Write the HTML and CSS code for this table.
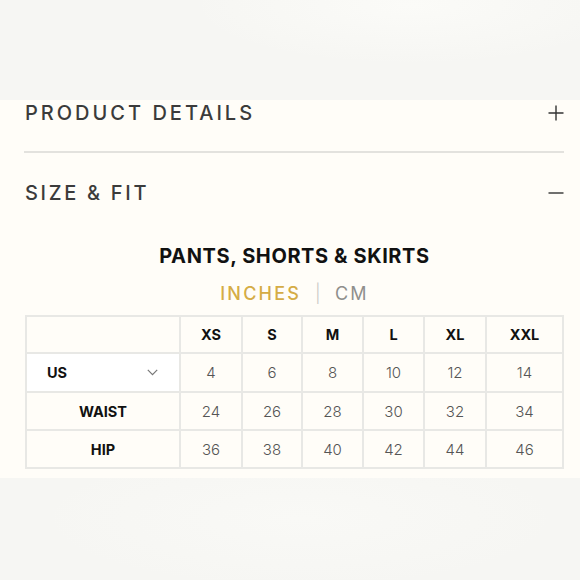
FILE: index.html
```html
<!DOCTYPE html>
<html>
<head>
<meta charset="utf-8">
<link rel="stylesheet" href="styles.css">
</head>
<body>
<div class="band band-top"></div>
<section class="panel">
  <div class="acc-head">
    <span class="acc-title">PRODUCT DETAILS</span>
    <svg class="acc-icon" width="16" height="16" viewBox="0 0 16 16"><path d="M8 0.5V15.5M0.5 8H15.5" stroke="#333" stroke-width="1.4" fill="none"/></svg>
  </div>
  <div class="divider"></div>
  <div class="acc-head acc-second">
    <span class="acc-title">SIZE &amp; FIT</span>
    <svg class="acc-icon" width="16" height="16" viewBox="0 0 16 16"><path d="M0.5 8H15.5" stroke="#333" stroke-width="1.4" fill="none"/></svg>
  </div>
  <h2 class="chart-title">PANTS, SHORTS &amp; SKIRTS</h2>
  <div class="units"><span class="unit-on">INCHES</span><span class="sep">|</span><span class="unit-off">CM</span></div>
  <table class="chart">
    <colgroup>
      <col class="c0"><col class="c1"><col class="c2"><col class="c3"><col class="c4"><col class="c5"><col class="c6">
    </colgroup>
    <tr class="r-head">
      <th></th><th>XS</th><th>S</th><th>M</th><th>L</th><th>XL</th><th>XXL</th>
    </tr>
    <tr class="r-us">
      <th class="sel"><div class="sel-inner"><span>US</span><svg width="11" height="7" viewBox="0 0 11 7"><path d="M0.8 0.8L5.5 5.6L10.2 0.8" stroke="#777" stroke-width="1.2" fill="none"/></svg></div></th>
      <td>4</td><td>6</td><td>8</td><td>10</td><td>12</td><td>14</td>
    </tr>
    <tr class="r-body">
      <th>WAIST</th><td>24</td><td>26</td><td>28</td><td>30</td><td>32</td><td>34</td>
    </tr>
    <tr class="r-body">
      <th>HIP</th><td>36</td><td>38</td><td>40</td><td>42</td><td>44</td><td>46</td>
    </tr>
  </table>
</section>
<div class="band band-bottom"></div>
</body>
</html>
```

FILE: styles.css
```css
* { box-sizing: border-box; }
html, body { margin: 0; padding: 0; }
body {
  width: 580px;
  height: 580px;
  overflow: hidden;
  background: #f6f6f3;
  font-family: "Inter", "Liberation Sans", sans-serif;
}
.band-top {
  height: 100px;
  background:
    radial-gradient(ellipse 220px 60px at 410px 5px, #fbfbf8 0%, rgba(251,251,248,0) 100%),
    #f6f6f3;
}
.band-bottom {
  height: 102px;
  background:
    radial-gradient(ellipse 260px 70px at 300px 40px, #f9f9f6 0%, rgba(249,249,246,0) 100%),
    #f6f6f3;
}
.panel {
  height: 378px;
  background: #fffdf8;
  padding: 0 16px 0 25px;
  display: flex;
  flex-direction: column;
}
.acc-head {
  height: 25px;
  flex: none;
  display: flex;
  align-items: center;
  justify-content: space-between;
}
.acc-title {
  font-size: 20px;
  font-weight: 500;
  letter-spacing: 3px;
  color: #3b3b3b;
}
.acc-second .acc-title { letter-spacing: 2.7px; }
.acc-icon { display: block; }
.divider {
  flex: none;
  margin-top: 26px;
  height: 2px;
  background: #e3e2de;
  margin-left: -1px;
}
.acc-second { margin-top: 27px; }
.chart-title {
  flex: none;
  margin: 39px 0 0;
  text-align: center;
  font-size: 20px;
  font-weight: 700;
  line-height: 24px;
  color: #111;
  padding-left: 0;
  letter-spacing: 0.6px;
}
.units {
  flex: none;
  margin-top: 15px;
  display: flex;
  justify-content: center;
  align-items: center;
  font-size: 18px;
  line-height: 22px;
  letter-spacing: 2.2px;
  padding-left: 0;
}
.unit-on { color: #d5ac45; font-weight: 500; }
.sep { color: #c9c9c6; margin: 0 12px 0 14px; font-weight: 300; }
.unit-off { color: #8f8f8c; font-weight: 400; }
.chart {
  flex: none;
  margin-top: 10px;
  border-collapse: collapse;
  width: 537px;
  table-layout: fixed;
}
.c0 { width: 154px; }
.c1 { width: 62px; }
.c2 { width: 60px; }
.c3 { width: 61px; }
.c4 { width: 61px; }
.c5 { width: 62px; }
.c6 { width: 77px; }
.chart th, .chart td {
  border: 2px solid #e8e8e5;
  text-align: center;
  padding: 0;
}
.chart th {
  font-size: 14.5px;
  font-weight: 700;
  color: #111;
}
.chart td {
  font-size: 15px;
  font-weight: 300;
  color: #555;
}
.r-head { height: 37px; }
.r-us { height: 39px; }
.r-body { height: 38px; }
.chart .sel { background: #ffffff; text-align: left; }
.sel-inner {
  display: flex;
  align-items: center;
  justify-content: space-between;
  padding: 0 21px 0 20px;
}
```
